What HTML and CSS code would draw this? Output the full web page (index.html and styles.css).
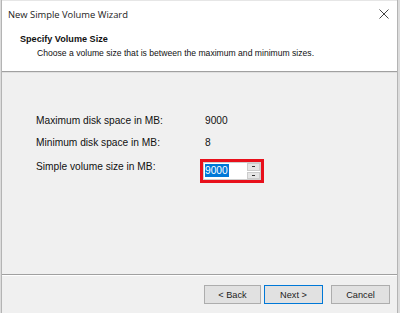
FILE: index.html
```html
<!DOCTYPE html>
<html lang="en">
<head>
    <meta charset="UTF-8">
    <title>New Simple Volume Wizard</title>
    <link rel="stylesheet" href="styles.css">
</head>
<body>
    <div class="window">
        <div class="titlebar">
            <span class="title">New Simple Volume Wizard</span>
            <svg class="close" width="10" height="10" viewBox="0 0 10 10">
                <path d="M0.5 0.5 L9.5 9.5 M9.5 0.5 L0.5 9.5" stroke="#444" stroke-width="1"/>
            </svg>
        </div>

        <div class="page-header">
            <div class="page-title">Specify Volume Size</div>
            <div class="page-subtitle">Choose a volume size that is between the maximum and minimum sizes.</div>
        </div>

        <div class="content">
            <div class="row">
                <span class="label">Maximum disk space in MB:</span>
                <span class="value">9000</span>
            </div>
            <div class="row row-tall">
                <span class="label">Minimum disk space in MB:</span>
                <span class="value">8</span>
            </div>
            <div class="row row-input">
                <span class="label">Simple volume size in MB:</span>
                <div class="highlight">
                    <div class="spin">
                        <div class="spin-field"><span class="selected">9000</span></div>
                        <div class="spin-buttons">
                            <div class="spin-btn"><span class="dot"></span></div>
                            <div class="spin-btn"><span class="dot"></span></div>
                        </div>
                    </div>
                </div>
            </div>
        </div>

        <div class="footer">
            <button class="btn">&lt; Back</button>
            <button class="btn btn-default">Next &gt;</button>
            <button class="btn btn-cancel">Cancel</button>
        </div>
    </div>
</body>
</html>
```

FILE: styles.css
```css
/* Reset */
* {
    margin: 0;
    padding: 0;
    box-sizing: border-box;
}

body {
    font-family: 'Liberation Sans', Arial, sans-serif;
    font-size: 10.2px;
    color: #000;
    background-color: #dcdcdc;
    width: 400px;
    height: 313px;
    overflow: hidden;
    padding-left: 1px;
}

.window {
    width: 397px;
    height: 313px;
    background-color: #f0f0f0;
    border-left: 1px solid #b4b4b4;
    border-right: 1px solid #b4b4b4;
    display: flex;
    flex-direction: column;
}

/* Title bar */
.titlebar {
    height: 27px;
    background-color: #fff;
    border-top: 1px solid #e6e6e6;
    display: flex;
    align-items: center;
    justify-content: space-between;
    padding: 0 8px 0 6px;
}

.title {
    font-family: 'Open Sans', 'Noto Sans', sans-serif;
    font-size: 9.4px;
    color: #222;
}

/* Header area */
.page-header {
    height: 45px;
    background-color: #fff;
    border-bottom: 1px solid #a0a0a0;
    box-shadow: 0 1px 0 #e0e0e0;
    padding: 5px 0 0 18px;
}

.page-title {
    font-size: 9.1px;
    font-weight: bold;
    line-height: 14px;
    color: #111;
}

.page-subtitle {
    font-size: 8.6px;
    padding-left: 17px;
    line-height: 14px;
    color: #111;
}

/* Content */
.content {
    flex: 1;
    padding: 42px 0 0 34px;
    border-bottom: 1px solid #a0a0a0;
    box-shadow: 0 1px 0 #fff;
}

.row {
    display: flex;
    height: 22px;
    line-height: 14px;
    color: #111;
}

.row-tall {
    height: 24px;
}

.label {
    width: 169px;
}

.row-input {
    height: 30px;
}

.highlight {
    margin: -1px 0 0 -5px;
    width: 64px;
    height: 24px;
    border: 3px solid #e8101b;
    background-color: #ebebeb;
}

.spin {
    display: flex;
    height: 18px;
    background-color: #fff;
    border: 1px solid #cfcfcf;
}

.spin-field {
    flex: 1;
    padding: 1px 0 0 1px;
}

.selected {
    background-color: #0078d7;
    color: #fff;
    line-height: 13px;
    display: inline-block;
    padding: 0 1px 0 0;
}

.spin-buttons {
    width: 13px;
    display: flex;
    flex-direction: column;
    gap: 1px;
}

.spin-btn {
    flex: 1;
    background-color: #e6e6e6;
    border: 1px solid #cccccc;
    display: flex;
    align-items: center;
    justify-content: center;
}

.dot {
    width: 3px;
    height: 1px;
    background-color: #333;
}

/* Footer */
.footer {
    height: 38px;
    display: flex;
    align-items: center;
    justify-content: flex-end;
    padding: 1px 7px 0 0;
}

.btn {
    font-family: 'Liberation Sans', Arial, sans-serif;
    font-size: 9.2px;
    color: #222;
    width: 57px;
    height: 19px;
    background-color: #e1e1e1;
    border: 1px solid #adadad;
    margin-left: 3px;
}

.btn-default {
    width: 59px;
    border: 1px solid #0078d7;
}

.btn-cancel {
    width: 59px;
    margin-left: 8px;
}
```
